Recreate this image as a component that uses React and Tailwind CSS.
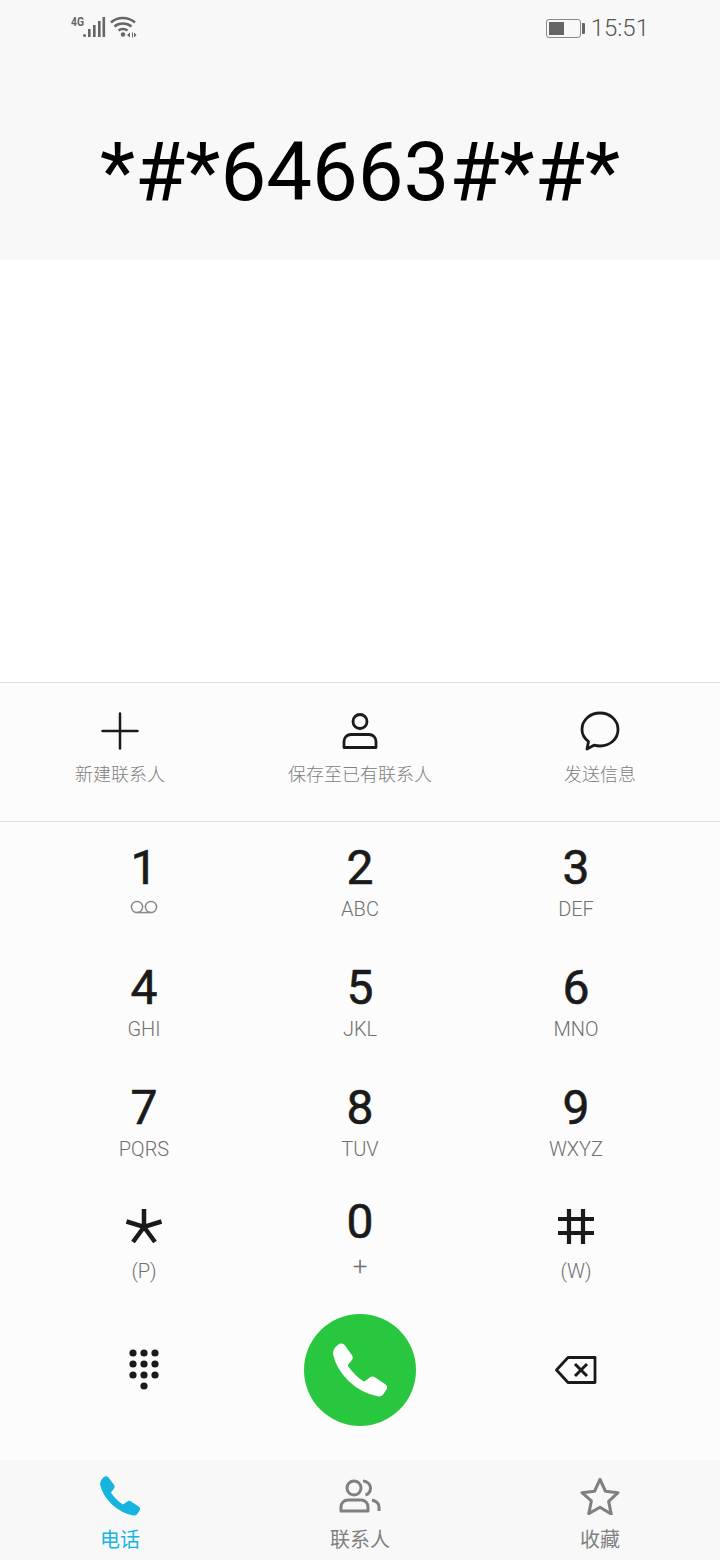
const FONT = "font-['Roboto','Noto_Sans_CJK_SC',sans-serif]";

const keys = [
  { digit: "1", voicemail: true },
  { digit: "2", sub: "ABC" },
  { digit: "3", sub: "DEF" },
  { digit: "4", sub: "GHI" },
  { digit: "5", sub: "JKL" },
  { digit: "6", sub: "MNO" },
  { digit: "7", sub: "PQRS" },
  { digit: "8", sub: "TUV" },
  { digit: "9", sub: "WXYZ" },
];

const PHONE_PATH =
  "M5 1.200C6.500 0 8.800.2 10 1.800l7 9.700c1 1.400.9 3-.1 4.200l-3.400 4.300c-.7 1-.7 2 0 3 4 5.500 9 11 15 14.800 1 .6 2.200.6 3.200-.1l4.800-3.500c1.200-.8 2.600-.8 3.800 0l10.400 6.800c1.500 1 1.800 2.500 1 3.800l-3.200 4.800c-1.100 1.500-2.800 2.100-4.600 1.700C33 49.300 23.500 44 15.500 36.500 8 29 2.200 20 .3 11-.2 7.500.9 4.300 3.500 2.500z";

const StatusBar = () => (
  <div className="flex h-[56px] items-start justify-between pl-[71px] pr-[71px]">
    <div className="flex items-start pt-[14px]">
      <svg width="66" height="26" viewBox="0 0 66 26" fill="#666">
        <text x="0" y="11.500" fontSize="12" fontWeight="700" fontFamily="Roboto" textLength="13" lengthAdjust="spacingAndGlyphs">4G</text>
        <circle cx="13.500" cy="21.500" r="1.500" />
        <rect x="17" y="15" width="2.600" height="8" />
        <rect x="22" y="11" width="2.600" height="12" />
        <rect x="27" y="7" width="2.600" height="16" />
        <rect x="31.500" y="3" width="2.600" height="20" />
        <path d="M40 8.500c6.500-6 17-6 24 0" fill="none" stroke="#666" strokeWidth="2.500" />
        <path d="M43.500 12.500c4.500-4 12-4 17 0" fill="none" stroke="#666" strokeWidth="2.500" />
        <path d="M47.500 16.500c2.500-2 6.500-2 9 0" fill="none" stroke="#666" strokeWidth="2.500" />
        <circle cx="52" cy="20.500" r="2.200" />
        <path d="M56 21l3-2.500v5zM61 18.500h1v5h-1zM63 18.500l2.500 2.500-2.500 2.500z" />
      </svg>
    </div>
    <div className="flex items-center gap-[6px] pt-[16px]">
      <div className="flex items-center gap-[1px]">
        <div className="flex h-[19px] w-[35px] items-center rounded-[3px] border border-[#8a8a8a] p-[2px]">
          <div className="h-full w-[15px] bg-[#666666]" />
        </div>
        <div className="h-[11px] w-[3px] rounded-r-[1px] bg-[#666666]" />
      </div>
      <span className="text-[24px] leading-[24px] font-light text-[#555555]">15:51</span>
    </div>
  </div>
);

const Action = ({ label, children }) => (
  <div className="flex w-[240px] flex-col items-center pt-[28px]">
    <div className="flex h-[40px] items-center justify-center">{children}</div>
    <span className="mt-[12px] text-[18px] leading-[24px] font-light text-[#808080]">{label}</span>
  </div>
);

const Key = ({ digit, sub, voicemail }) => (
  <div className="flex h-[120px] flex-col items-center pt-[22px]">
    <span className="text-[48px] leading-[48px] text-[#1a1a1a] [-webkit-text-stroke:0.6px_#1a1a1a]">{digit}</span>
    {voicemail ? (
      <svg className="mt-[7px]" width="28" height="16" viewBox="0 0 28 16" fill="none" stroke="#8c8c8c" strokeWidth="1.500">
        <circle cx="7" cy="8" r="5.600" />
        <circle cx="21" cy="8" r="5.600" />
        <path d="M7 13.600h14" />
      </svg>
    ) : (
      <span className="mt-[5px] text-[20px] leading-[24px] font-light text-[#707070]">{sub}</span>
    )}
  </div>
);

const DialpadIcon = () => (
  <svg width="32" height="44" viewBox="0 0 32 44" fill="#1a1a1a">
    {[5, 16, 27].map((x) =>
      [4, 15, 26].map((y) => <circle key={`${x}-${y}`} cx={x} cy={y} r="3.600" />)
    )}
    <circle cx="16" cy="37" r="3.600" />
  </svg>
);

const Tab = ({ label, active, children }) => (
  <div className="flex w-[240px] flex-col items-center pt-[14px]">
    <div className="flex h-[44px] items-center justify-center">{children}</div>
    <span className={`mt-[8px] text-[20px] leading-[28px] ${active ? "text-[#17b4e0]" : "text-[#808080]"}`}>
      {label}
    </span>
  </div>
);

export default function App() {
  return (
    <div className={`flex h-[1560px] w-[720px] flex-col overflow-hidden bg-white ${FONT}`}>
      <div className="h-[260px] bg-[#f8f8f8]">
        <StatusBar />
        <div className="mt-[60px] text-center text-[81.500px] leading-[112px] text-black">*#*64663#*#*</div>
      </div>

      <div className="flex-1 bg-white" />

      <div className="flex h-[140px] justify-center border-y border-[#e0e0e0] bg-[#fcfcfc]">
        <Action label="新建联系人">
          <svg width="38" height="38" viewBox="0 0 38 38" stroke="#1a1a1a" strokeWidth="2.500" strokeLinecap="round">
            <path d="M19 1.500v35M1.500 19h35" />
          </svg>
        </Action>
        <Action label="保存至已有联系人">
          <svg width="36" height="38" viewBox="0 0 36 38" fill="none" stroke="#1a1a1a" strokeWidth="2.800">
            <circle cx="18" cy="9.500" r="7" />
            <path d="M2 35.500v-6c0-4 3-7 7-7h18c4 0 7 3 7 7v6z" strokeLinejoin="round" />
          </svg>
        </Action>
        <Action label="发送信息">
          <svg width="40" height="40" viewBox="0 0 40 40" fill="none" stroke="#1a1a1a" strokeWidth="2.800" strokeLinejoin="round">
            <path d="M20 2c10 0 18 7 18 16.500S30 35 20 35c-2 0-4-.3-6-.8L7 38l1.500-7.500C4.500 27.500 2 23.500 2 18.500 2 9 10 2 20 2z" />
          </svg>
        </Action>
      </div>

      <div className="bg-[#fcfcfc] px-[36px]">
        <div className="grid grid-cols-3">
          {keys.map((k) => (
            <Key key={k.digit} {...k} />
          ))}
          <div className="flex h-[120px] flex-col items-center">
            <svg className="mt-[26px]" width="38" height="36" viewBox="0 0 38 36" stroke="#1a1a1a" strokeWidth="4.500">
              <path d="M19 1v19M1.500 13.500L19 19l17.500-5.500M19 19L8 34M19 19l11 15" fill="none" />
            </svg>
            <span className="mt-[15px] text-[20px] leading-[24px] font-light text-[#707070]">(P)</span>
          </div>
          <div className="flex h-[120px] flex-col items-center">
            <span className="pt-[16px] text-[48px] leading-[48px] text-[#1a1a1a] [-webkit-text-stroke:0.6px_#1a1a1a]">0</span>
            <span className="mt-[5px] text-[26px] leading-[30px] font-light text-[#707070]">+</span>
          </div>
          <div className="flex h-[120px] flex-col items-center">
            <svg className="mt-[26px]" width="36" height="36" viewBox="0 0 36 36" stroke="#1a1a1a" strokeWidth="4.200">
              <path d="M11 1v35M25 1v35M0 11h36M0 25h36" fill="none" />
            </svg>
            <span className="mt-[15px] text-[20px] leading-[24px] font-light text-[#707070]">(W)</span>
          </div>
        </div>

        <div className="grid h-[158px] grid-cols-3 items-start">
          <div className="flex justify-center pt-[47px]">
            <DialpadIcon />
          </div>
          <div className="flex justify-center pt-[12px]">
            <div className="flex h-[112px] w-[112px] items-center justify-center rounded-full bg-[#28c73f]">
              <svg width="54" height="54" viewBox="-1 -1 54 54" fill="white" stroke="white" strokeWidth="2" strokeLinejoin="round">
                <path d={PHONE_PATH} />
              </svg>
            </div>
          </div>
          <div className="flex justify-center pt-[54px]">
            <svg width="42" height="28" viewBox="0 0 42 28" fill="none" stroke="#1a1a1a" strokeWidth="2.800" strokeLinejoin="round">
              <path d="M13 1.500h27v25H13L1.500 14z" />
              <path d="M20 8l12 12M32 8L20 20" strokeWidth="3" />
            </svg>
          </div>
        </div>
      </div>

      <div className="flex h-[100px] justify-center bg-[#f8f8f8]">
        <Tab label="电话" active>
          <svg width="40" height="40" viewBox="-1 -1 54 54" fill="#17b4e0" stroke="#17b4e0" strokeWidth="2" strokeLinejoin="round">
            <path d={PHONE_PATH} />
          </svg>
        </Tab>
        <Tab label="联系人">
          <svg width="42" height="34" viewBox="0 0 42 34" fill="none" stroke="#808080" strokeWidth="3">
            <circle cx="15" cy="9" r="7" />
            <path d="M2 32v-4c0-4 3-7 7-7h13c4 0 7 3 7 7v4z" strokeLinejoin="round" />
            <path d="M24 2c4.500 0 7.500 3.500 7.500 7s-2 6-5 7M33 21c4 1 7 3 7 7v4" />
          </svg>
        </Tab>
        <Tab label="收藏">
          <svg width="40" height="38" viewBox="0 0 42 40" fill="none" stroke="#808080" strokeWidth="3.200" strokeLinejoin="round">
            <path d="M21 2.500l5.700 12.500 13.300 1.500-9.900 9.200 2.700 13.300L21 31.800 9.200 38.500l2.700-13.300L2 16.500 15.300 15z" />
          </svg>
        </Tab>
      </div>
    </div>
  );
}
